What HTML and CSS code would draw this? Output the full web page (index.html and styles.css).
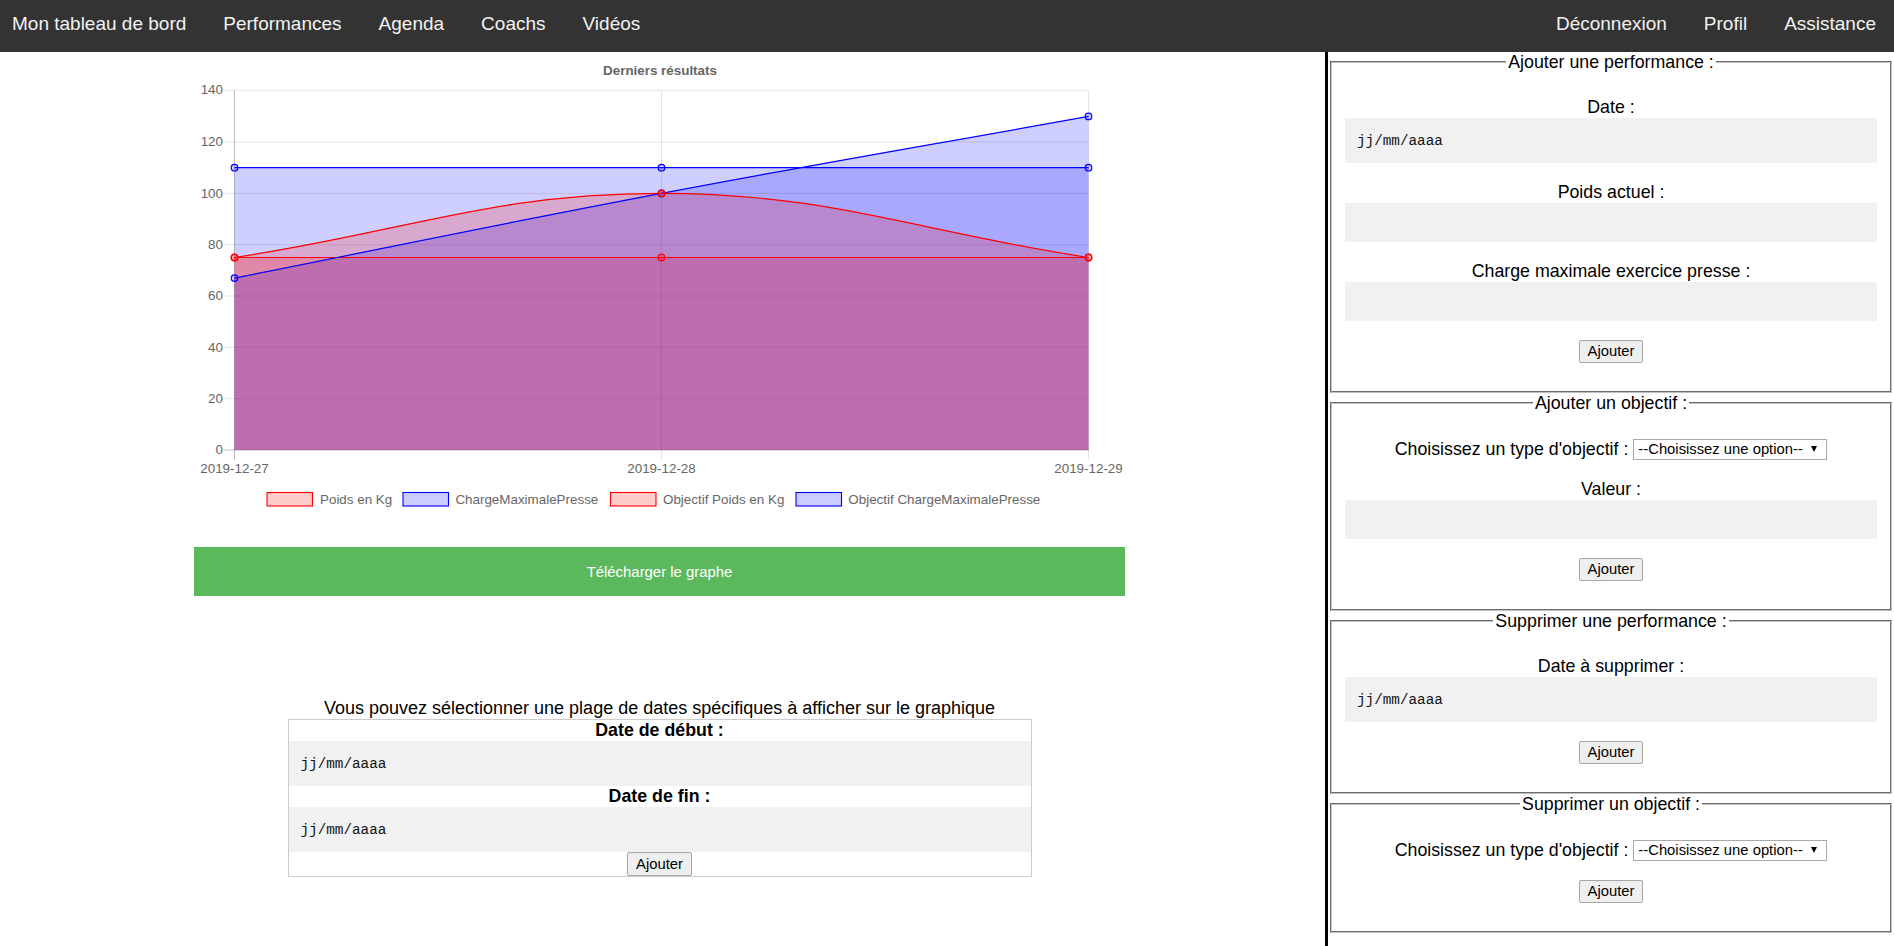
FILE: index.html
```html
<!DOCTYPE html>
<html lang="fr">
<head>
<meta charset="utf-8">
<title>Mon tableau de bord</title>
<link rel="stylesheet" href="styles.css">
</head>
<body>
<nav class="topnav">
  <div class="nav-group">
    <a href="#">Mon tableau de bord</a>
    <a href="#">Performances</a>
    <a href="#">Agenda</a>
    <a href="#">Coachs</a>
    <a href="#">Vidéos</a>
  </div>
  <div class="nav-group">
    <a href="#">Déconnexion</a>
    <a href="#">Profil</a>
    <a href="#">Assistance</a>
  </div>
</nav>

<main class="layout">
  <section class="left">
    <div class="chart">
      <svg class="chart-svg" viewBox="0 0 931 465" width="931" height="465">
        <text class="chart-title" x="466" y="22.8" text-anchor="middle">Derniers résultats</text>

        <g class="grid">
          <line x1="30.5" y1="38.7" x2="894.5" y2="38.7"/>
          <line x1="30.5" y1="90" x2="894.5" y2="90"/>
          <line x1="30.5" y1="141.4" x2="894.5" y2="141.4"/>
          <line x1="30.5" y1="192.7" x2="894.5" y2="192.7"/>
          <line x1="30.5" y1="244" x2="894.5" y2="244"/>
          <line x1="30.5" y1="295.3" x2="894.5" y2="295.3"/>
          <line x1="30.5" y1="346.7" x2="894.5" y2="346.7"/>
          <line x1="467.5" y1="38.7" x2="467.5" y2="408"/>
          <line x1="894.5" y1="38.7" x2="894.5" y2="408"/>
        </g>
        <g class="grid zero">
          <line x1="30.5" y1="398" x2="894.5" y2="398"/>
          <line x1="40.5" y1="38.7" x2="40.5" y2="408"/>
        </g>

        <g class="tick-labels">
          <text x="29" y="41.8" text-anchor="end">140</text>
          <text x="29" y="94.3" text-anchor="end">120</text>
          <text x="29" y="145.7" text-anchor="end">100</text>
          <text x="29" y="197" text-anchor="end">80</text>
          <text x="29" y="248.3" text-anchor="end">60</text>
          <text x="29" y="299.6" text-anchor="end">40</text>
          <text x="29" y="351" text-anchor="end">20</text>
          <text x="29" y="402.3" text-anchor="end">0</text>
          <text x="40.5" y="420.6" text-anchor="middle">2019-12-27</text>
          <text x="467.5" y="420.6" text-anchor="middle">2019-12-28</text>
          <text x="894.5" y="420.6" text-anchor="middle">2019-12-29</text>
        </g>

        <!-- fills (drawn last dataset first) -->
        <path class="fill-blue" d="M40.5,115.7 L894.5,115.7 L894.5,398 L40.5,398 Z"/>
        <path class="fill-red" d="M40.5,205.5 L894.5,205.5 L894.5,398 L40.5,398 Z"/>
        <path class="fill-blue" d="M40.5,226.1 C211.3,192.2 296.4,173.8 467.5,141.4 C638,109.1 723.7,95.2 894.5,64.4 L894.5,398 L40.5,398 Z"/>
        <path class="fill-red" d="M40.5,205.5 C211.3,179.9 296.7,141.4 467.5,141.4 C638.3,141.4 723.7,179.9 894.5,205.5 L894.5,398 L40.5,398 Z"/>

        <!-- lines -->
        <path class="line-blue" d="M40.5,115.7 L894.5,115.7"/>
        <path class="line-red" d="M40.5,205.5 L894.5,205.5"/>
        <path class="line-blue" d="M40.5,226.1 C211.3,192.2 296.4,173.8 467.5,141.4 C638,109.1 723.7,95.2 894.5,64.4"/>
        <path class="line-red" d="M40.5,205.5 C211.3,179.9 296.7,141.4 467.5,141.4 C638.3,141.4 723.7,179.9 894.5,205.5"/>

        <!-- points -->
        <g class="pt-blue">
          <circle cx="40.5" cy="115.7" r="3.3"/>
          <circle cx="467.5" cy="115.7" r="3.3"/>
          <circle cx="894.5" cy="115.7" r="3.3"/>
          <circle cx="40.5" cy="226.1" r="3.3"/>
          <circle cx="467.5" cy="141.4" r="3.3"/>
          <circle cx="894.5" cy="64.4" r="3.3"/>
        </g>
        <g class="pt-red">
          <circle cx="40.5" cy="205.5" r="3.3"/>
          <circle cx="467.5" cy="205.5" r="3.3"/>
          <circle cx="894.5" cy="205.5" r="3.3"/>
          <circle cx="40.5" cy="205.5" r="3.3"/>
          <circle cx="467.5" cy="141.4" r="3.3"/>
          <circle cx="894.5" cy="205.5" r="3.3"/>
        </g>

        <!-- legend -->
        <g class="legend">
          <rect class="lg-red" x="73" y="440.5" width="45.5" height="13.5"/>
          <text x="126" y="451.8">Poids en Kg</text>
          <rect class="lg-blue" x="209" y="440.5" width="45.5" height="13.5"/>
          <text x="261.4" y="451.8">ChargeMaximalePresse</text>
          <rect class="lg-red" x="416.5" y="440.5" width="45.5" height="13.5"/>
          <text x="469" y="451.8">Objectif Poids en Kg</text>
          <rect class="lg-blue" x="602" y="440.5" width="45.5" height="13.5"/>
          <text x="654.3" y="451.8">Objectif ChargeMaximalePresse</text>
        </g>
      </svg>
    </div>

    <button class="download" type="button">Télécharger le graphe</button>

    <p class="range-intro">Vous pouvez sélectionner une plage de dates spécifiques à afficher sur le graphique</p>
    <form class="range">
      <label class="range-label">Date de début :</label>
      <input class="field field-date" type="text" placeholder="jj/mm/aaaa">
      <label class="range-label">Date de fin :</label>
      <input class="field field-date" type="text" placeholder="jj/mm/aaaa">
      <button class="btn" type="button">Ajouter</button>
    </form>
  </section>

  <aside class="right">
    <fieldset class="panel">
      <legend>Ajouter une performance :</legend>
      <div class="panel-body">
        <div class="group">
          <label class="lbl">Date :</label>
          <input class="field field-date" type="text" placeholder="jj/mm/aaaa">
        </div>
        <div class="group">
          <label class="lbl">Poids actuel :</label>
          <input class="field field-text" type="text">
        </div>
        <div class="group">
          <label class="lbl">Charge maximale exercice presse :</label>
          <input class="field field-text" type="text">
        </div>
        <button class="btn" type="button">Ajouter</button>
      </div>
    </fieldset>

    <fieldset class="panel">
      <legend>Ajouter un objectif :</legend>
      <div class="panel-body">
        <div class="select-row">
          <span>Choisissez un type d'objectif :</span>
          <span class="select-wrap"><select class="select"><option>--Choisissez une option--</option></select></span>
        </div>
        <div class="group">
          <label class="lbl">Valeur :</label>
          <input class="field field-text" type="text">
        </div>
        <button class="btn" type="button">Ajouter</button>
      </div>
    </fieldset>

    <fieldset class="panel">
      <legend>Supprimer une performance :</legend>
      <div class="panel-body">
        <div class="group">
          <label class="lbl">Date à supprimer :</label>
          <input class="field field-date" type="text" placeholder="jj/mm/aaaa">
        </div>
        <button class="btn" type="button">Ajouter</button>
      </div>
    </fieldset>

    <fieldset class="panel">
      <legend>Supprimer un objectif :</legend>
      <div class="panel-body">
        <div class="select-row">
          <span>Choisissez un type d'objectif :</span>
          <span class="select-wrap"><select class="select"><option>--Choisissez une option--</option></select></span>
        </div>
        <button class="btn" type="button">Ajouter</button>
      </div>
    </fieldset>
  </aside>
</main>
</body>
</html>
```

FILE: styles.css
```css
* {
  box-sizing: border-box;
}

html, body {
  margin: 0;
  padding: 0;
  background: #fff;
}

body {
  font-family: "Liberation Sans", Arial, sans-serif;
  font-size: 17.8px;
  color: #000;
}

/* ---------- top navigation ---------- */
.topnav {
  display: flex;
  justify-content: space-between;
  align-items: flex-start;
  height: 52px;
  padding: 13px 18px 0 12px;
  background: #333;
}

.nav-group {
  display: flex;
  gap: 37px;
}

.nav-group a {
  color: #f2f2f2;
  text-decoration: none;
  font-size: 19px;
  line-height: 22px;
}

/* ---------- layout ---------- */
.layout {
  display: flex;
  align-items: stretch;
}

.left {
  flex: 0 0 1325px;
  padding-right: 6px;
}

.right {
  flex: 1 1 auto;
  min-height: calc(100vh - 52px);
  border-left: 3px solid #000;
  display: flex;
  flex-direction: column;
}

/* ---------- chart ---------- */
.chart {
  width: 931px;
  margin: 0 auto;
}

.chart-svg {
  display: block;
}

.chart-title {
  font: bold 13.4px "Liberation Sans", Arial, sans-serif;
  fill: #666;
}

.tick-labels text,
.legend text {
  font: 13.4px "Liberation Sans", Arial, sans-serif;
  fill: #666;
}

.grid line {
  stroke: rgba(0, 0, 0, 0.1);
  stroke-width: 1;
}

.grid.zero line {
  stroke: rgba(0, 0, 0, 0.25);
}

.fill-red {
  fill: rgba(255, 0, 0, 0.19);
}

.fill-blue {
  fill: rgba(0, 0, 255, 0.19);
}

.line-red {
  fill: none;
  stroke: #ff0000;
  stroke-width: 1.2;
}

.line-blue {
  fill: none;
  stroke: #0000ff;
  stroke-width: 1.2;
}

.pt-red circle {
  fill: rgba(255, 0, 0, 0.2);
  stroke: #ff0000;
  stroke-width: 1.2;
}

.pt-blue circle {
  fill: rgba(0, 0, 255, 0.2);
  stroke: #0000ff;
  stroke-width: 1.2;
}

.lg-red {
  fill: rgba(255, 0, 0, 0.2);
  stroke: #ff0000;
  stroke-width: 1.1;
}

.lg-blue {
  fill: rgba(0, 0, 255, 0.2);
  stroke: #0000ff;
  stroke-width: 1.1;
}

/* ---------- download button ---------- */
.download {
  display: block;
  width: 931px;
  height: 49px;
  margin: 30px auto 0;
  border: none;
  background: #5cb85c;
  color: #fff;
  font-family: "Liberation Sans", Arial, sans-serif;
  font-size: 14.9px;
  cursor: pointer;
}

/* ---------- date range ---------- */
.range-intro {
  margin: 102px 0 0;
  text-align: center;
  line-height: 20px;
  font-size: 18px;
}

.range {
  width: 744px;
  margin: 1px auto 0;
  border: 1px solid #ccc;
  display: flex;
  flex-direction: column;
  align-items: center;
}

.range-label {
  display: block;
  width: 100%;
  text-align: center;
  font-weight: bold;
  line-height: 21px;
}

/* ---------- inputs / buttons ---------- */
.field {
  display: block;
  width: 100%;
  border: none;
  background: #f1f1f1;
  padding: 0 12px;
  margin: 0;
  font-family: "Liberation Mono", "DejaVu Sans Mono", monospace;
  font-size: 14.3px;
  color: #111;
  outline: none;
}

.field::placeholder {
  color: #111;
  opacity: 1;
}

.field-date {
  height: 45px;
}

.field-text {
  height: 39.5px;
}

.btn {
  display: block;
  height: 23.5px;
  padding: 0 8px;
  margin: 0;
  border: 1px solid #a6a6a6;
  border-radius: 2px;
  background: #efefef;
  color: #000;
  font-family: "Liberation Sans", Arial, sans-serif;
  font-size: 14.8px;
  line-height: 20px;
  cursor: pointer;
}

/* ---------- right panels ---------- */
.panel {
  margin: 0 2px;
  padding: 0 13px;
  border: 2px groove #c0c0c0;
  min-width: 0;
}

.panel legend {
  margin: 0 auto;
  padding: 0 2px;
  line-height: 20px;
}

.panel-body {
  display: flex;
  flex-direction: column;
  align-items: center;
  gap: 18.5px;
  padding: 25px 0 28px;
}

.group {
  width: 100%;
  display: flex;
  flex-direction: column;
  align-items: center;
  gap: 1px;
}

.lbl {
  display: block;
  line-height: 20px;
  text-align: center;
}

.select-row {
  display: flex;
  align-items: center;
  gap: 5px;
  height: 22px;
}

.select-wrap {
  position: relative;
  display: inline-block;
}

.select-wrap::after {
  content: "";
  position: absolute;
  right: 10px;
  top: 7.5px;
  width: 0;
  height: 0;
  border-left: 3px solid transparent;
  border-right: 3px solid transparent;
  border-top: 6px solid #000;
  pointer-events: none;
}

.select {
  -webkit-appearance: none;
  appearance: none;
  width: 194px;
  height: 21px;
  padding: 0 0 0 4px;
  border: 1px solid #a9a9a9;
  border-radius: 0;
  background: #fff;
  color: #000;
  font-family: "Liberation Sans", Arial, sans-serif;
  font-size: 14.8px;
}
```
